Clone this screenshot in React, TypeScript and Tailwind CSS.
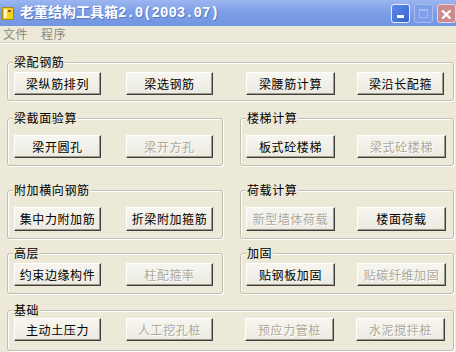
import React from 'react';

type BtnProps = { label: string; disabled?: boolean; w: number; h?: number; className?: string };

function Btn({ label, disabled, w, h = 23, className = '' }: BtnProps) {
  return (
    <button
      disabled={disabled}
      style={{ width: w, height: h }}
      className={`flex shrink-0 items-center justify-center border border-t-white border-l-white border-b-[#3f3e3a] border-r-[#3f3e3a] bg-gradient-to-b from-[#f6f5ef] to-[#ecebe2] text-[12px] leading-none tracking-[0.6px] shadow-[inset_-1px_-1px_0_#9d9a8c] ${
        disabled ? 'text-[#aca899] [text-shadow:1px_1px_0_#ffffff]' : 'text-black'
      } ${className}`}
    >
      {label}
    </button>
  );
}

type GroupProps = { title: string; className?: string; children: React.ReactNode };

function Group({ title, className = '', children }: GroupProps) {
  return (
    <fieldset
      className={`rounded-[3px] border border-[#c2bfb0] shadow-[inset_1px_1px_0_#ffffff,1px_1px_0_#ffffff] ${className}`}
    >
      <legend className="ml-[5px] bg-[#ece9d8] px-[1px] text-[12px] leading-[14px] tracking-[0.6px] text-black">
        {title}
      </legend>
      {children}
    </fieldset>
  );
}

function TitleIcon() {
  return (
    <svg width="12" height="13" viewBox="0 0 12 13" className="shrink-0">
      <rect x="0.5" y="0.5" width="11" height="12" fill="#f2d21a" stroke="#a88a10" />
      <rect x="2" y="2" width="3" height="9" fill="#fff6a8" />
      <rect x="6" y="3" width="3" height="2" fill="#b04818" />
    </svg>
  );
}

export default function App() {
  return (
    <div className="h-[352px] w-[456px] overflow-hidden bg-[#ece9d8] font-['Noto_Sans_CJK_SC','Liberation_Sans',sans-serif]">
      {/* title bar */}
      <div className="flex h-[26px] items-center bg-gradient-to-b from-[#9bb6f0] via-[#7c9de6] to-[#7396e2] pl-[2px]">
        <TitleIcon />
        <span className="ml-[6px] font-['Liberation_Mono','Noto_Sans_CJK_SC',monospace] text-[14px] font-bold leading-none text-white [text-shadow:1px_1px_0_#5a78c4]">
          老董结构工具箱2.0(2003.07)
        </span>
        <div className="ml-auto flex items-center gap-[4px] self-start pt-[4px]">
          <div className="flex h-[19px] w-[19px] items-end justify-center rounded-[3px] border border-[#e6ecfa] bg-gradient-to-br from-[#5d8ae8] to-[#3563cf] pb-[4px]">
            <div className="h-[3px] w-[7px] bg-white" />
          </div>
          <div className="flex h-[19px] w-[19px] items-center justify-center rounded-[3px] border border-[#a9bdf0] bg-[#7e9ee8]">
            <div className="h-[9px] w-[9px] border border-t-2 border-[#a6bcef]" />
          </div>
          <div className="flex h-[19px] w-[19px] items-center justify-center rounded-[3px] border border-[#eed6d6] bg-[#c98b8f] text-[15px] font-bold leading-none text-white">
            ✕
          </div>
        </div>
      </div>

      {/* menu bar */}
      <div className="flex h-[17px] items-center gap-[13px] border-b border-[#d8d5c6] pl-[3px] text-[12px] leading-none tracking-[0.5px] text-[#8a8a80]">
        <span>文件</span>
        <span>程序</span>
      </div>
      <div className="h-[1px] bg-white" />

      <div className="pl-[7px] pr-[2px]">
        <Group title="梁配钢筋" className="mt-[11px] pb-[5px] pt-[3px]">
          <div className="flex pl-[6px]">
            <Btn label="梁纵筋排列" w={87} />
            <Btn label="梁选钢筋" w={87} className="ml-[25px]" />
            <Btn label="梁腰筋计算" w={89} className="ml-[33px]" />
            <Btn label="梁沿长配箍" w={87} className="ml-[22px]" />
          </div>
        </Group>

        <div className="mt-[10px] flex gap-[17px]">
          <Group title="梁截面验算" className="w-[216px] pb-[7px] pt-[10px]">
            <div className="flex gap-[25px] pl-[6px]">
              <Btn label="梁开圆孔" w={87} />
              <Btn label="梁开方孔" w={87} disabled />
            </div>
          </Group>
          <Group title="楼梯计算" className="w-[214px] pb-[7px] pt-[10px]">
            <div className="flex gap-[22px] pl-[5px]">
              <Btn label="板式砼楼梯" w={89} />
              <Btn label="梁式砼楼梯" w={89} disabled />
            </div>
          </Group>
        </div>

        <div className="mt-[17px] flex gap-[17px]">
          <Group title="附加横向钢筋" className="w-[216px] pb-[7px] pt-[10px]">
            <div className="flex gap-[25px] pl-[6px]">
              <Btn label="集中力附加筋" w={87} h={24} />
              <Btn label="折梁附加箍筋" w={87} h={24} />
            </div>
          </Group>
          <Group title="荷载计算" className="w-[214px] pb-[7px] pt-[10px]">
            <div className="flex gap-[22px] pl-[5px]">
              <Btn label="新型墙体荷载" w={89} h={24} disabled />
              <Btn label="楼面荷载" w={89} h={24} />
            </div>
          </Group>
        </div>

        <div className="mt-[7px] flex gap-[17px]">
          <Group title="高层" className="w-[216px] pb-[7px] pt-[3px]">
            <div className="flex gap-[25px] pl-[6px]">
              <Btn label="约束边缘构件" w={87} />
              <Btn label="柱配箍率" w={87} disabled />
            </div>
          </Group>
          <Group title="加固" className="w-[214px] pb-[7px] pt-[3px]">
            <div className="flex gap-[22px] pl-[5px]">
              <Btn label="贴钢板加固" w={89} />
              <Btn label="贴碳纤维加固" w={89} disabled />
            </div>
          </Group>
        </div>

        <Group title="基础" className="mt-[9px] pb-[9px] pt-[1px]">
          <div className="flex pl-[6px]">
            <Btn label="主动土压力" w={87} />
            <Btn label="人工挖孔桩" w={87} disabled className="ml-[25px]" />
            <Btn label="预应力管桩" w={89} disabled className="ml-[32px]" />
            <Btn label="水泥搅拌桩" w={89} disabled className="ml-[22px]" />
          </div>
        </Group>
      </div>
    </div>
  );
}
